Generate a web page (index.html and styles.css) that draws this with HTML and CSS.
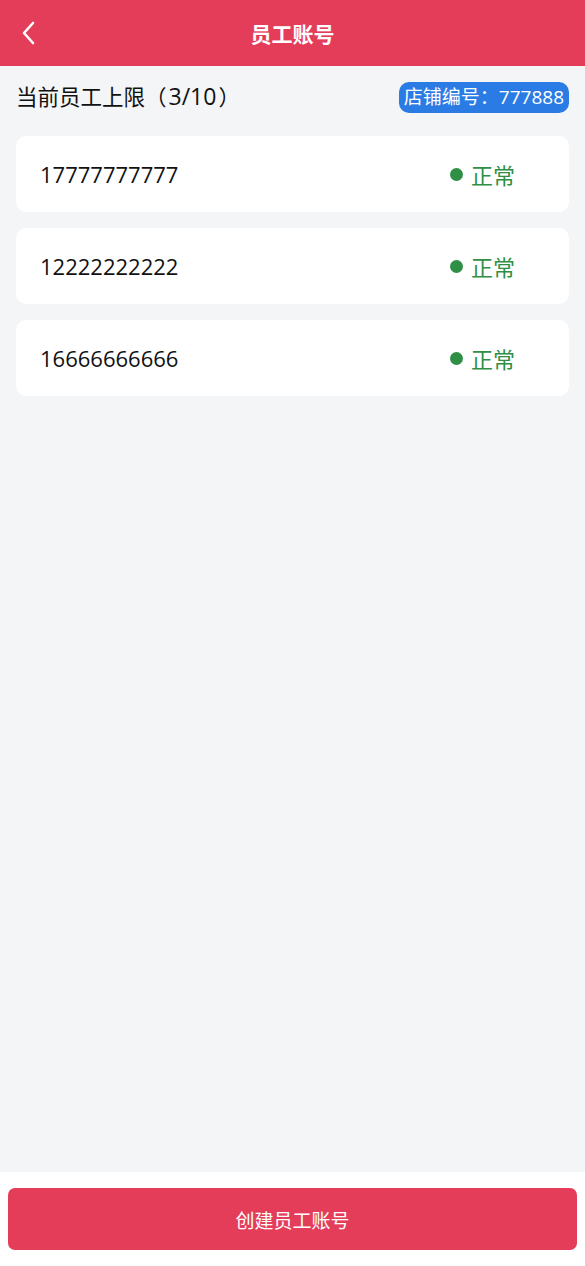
FILE: index.html
```html
<!DOCTYPE html>
<html lang="zh">
<head>
<meta charset="utf-8">
<link rel="stylesheet" href="styles.css">
</head>
<body>
<div class="page">
  <header class="topbar">
    <span class="back">
      <svg width="18" height="24" viewBox="0 0 18 24"><path d="M13 2 L4 12 L13 22" fill="none" stroke="#fff" stroke-width="2.6" stroke-linecap="round" stroke-linejoin="round"/></svg>
    </span>
    <h1 class="title">员工账号</h1>
  </header>
  <main class="content">
    <div class="summary">
      <span class="limit">当前员工上限（<span class="n">3/10</span>）</span>
      <span class="shop">店铺编号：777888</span>
    </div>
    <div class="list">
      <div class="card"><span class="phone">17777777777</span><span class="status"><i class="dot"></i>正常</span></div>
      <div class="card"><span class="phone">12222222222</span><span class="status"><i class="dot"></i>正常</span></div>
      <div class="card"><span class="phone">16666666666</span><span class="status"><i class="dot"></i>正常</span></div>
    </div>
  </main>
  <footer class="footer">
    <button class="create">创建员工账号</button>
  </footer>
</div>
</body>
</html>
```

FILE: styles.css
```css
* { box-sizing: border-box; }
html, body { margin: 0; padding: 0; }
body {
  font-family: "Open Sans", "Noto Sans CJK SC", sans-serif;
  background: #f4f5f7;
  color: #111;
}
.page {
  display: flex;
  flex-direction: column;
  height: 1266px;
}
.topbar {
  height: 66px;
  background: #e43d5a;
  display: flex;
  align-items: center;
  justify-content: center;
  position: relative;
}
.back {
  position: absolute;
  left: 20px;
  top: 21px;
  display: flex;
}
.title {
  margin: 0;
  color: #fff;
  font-size: 21px;
  font-weight: 700;
  font-family: "Noto Sans CJK SC", sans-serif;
  line-height: 1;
}
.content {
  flex: 1;
  padding: 16px 16px 0;
}
.summary {
  display: flex;
  justify-content: space-between;
  align-items: center;
  height: 31px;
}
.limit {
  font-family: "Noto Sans CJK SC", sans-serif;
  font-size: 21.5px;
  line-height: 26px;
  margin-top: -3px;
  color: #111;
}
.limit .n {
  font-family: "Open Sans", sans-serif;
  font-size: 23px;
  margin: 0 2px;
}
.shop {
  background: #2a7be4;
  color: #fff;
  font-size: 19px;
  font-family: "Open Sans", "Noto Sans CJK SC", sans-serif;
  height: 31px;
  line-height: 31px;
  padding: 0 5px;
  border-radius: 10px;
}
.list {
  display: flex;
  flex-direction: column;
  gap: 16px;
  margin-top: 23px;
}
.card {
  background: #fff;
  border-radius: 10px;
  height: 76px;
  display: flex;
  align-items: center;
  justify-content: space-between;
  padding: 0 54px 0 24px;
}
.phone {
  font-size: 22px;
  color: #111;
}
.status {
  display: flex;
  align-items: center;
  gap: 8px;
  color: #2e8f45;
  font-size: 22px;
  font-family: "Noto Sans CJK SC", sans-serif;
}
.dot {
  width: 13px;
  height: 13px;
  border-radius: 50%;
  background: #2e8f45;
  display: block;
}
.footer {
  background: #fff;
  padding: 16px 8px;
}
.create {
  width: 100%;
  height: 62px;
  border: 0;
  border-radius: 7px;
  background: #e43d5a;
  color: #fff;
  font-size: 19px;
  font-family: "Noto Sans CJK SC", sans-serif;
}
```
